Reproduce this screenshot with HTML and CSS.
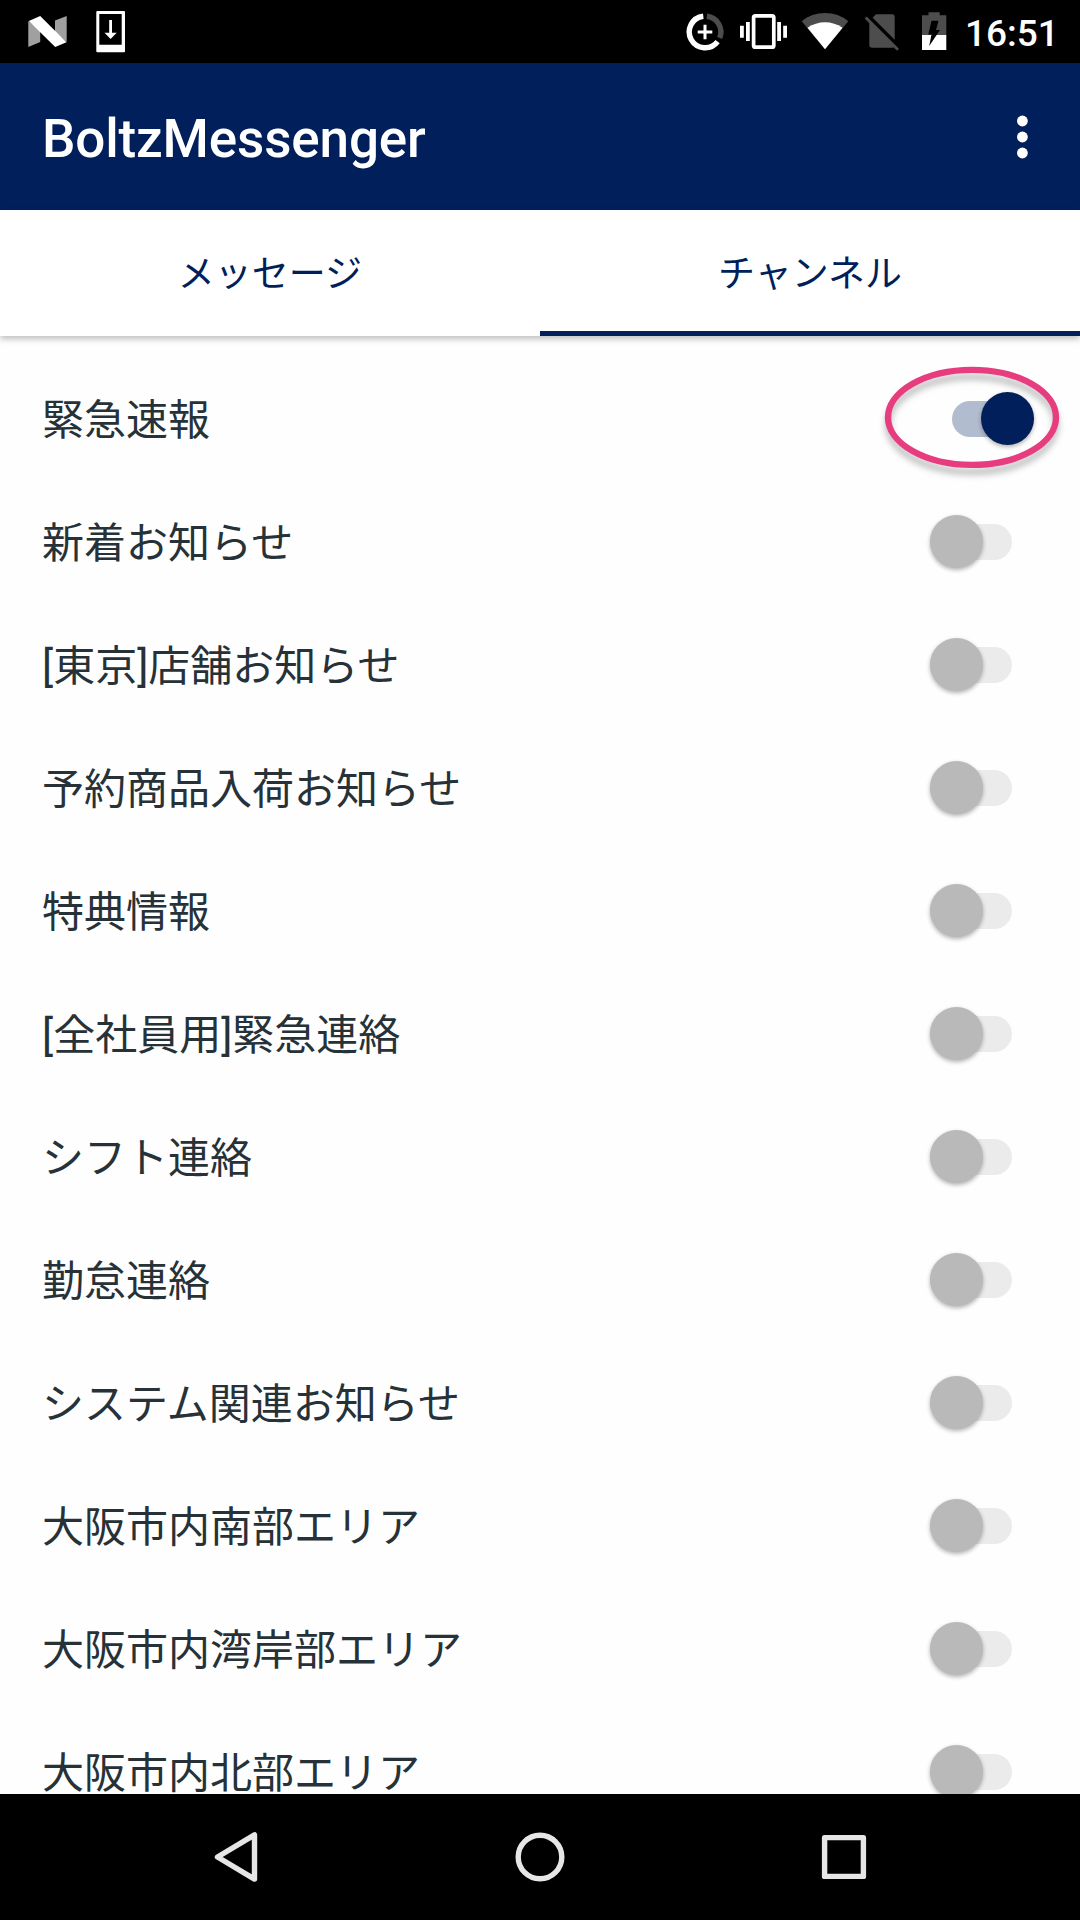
FILE: index.html
```html
<!DOCTYPE html>
<html lang="ja">
<head>
    <meta charset="UTF-8">
    <meta name="viewport" content="width=device-width, initial-scale=1.0">
    <title>BoltzMessenger</title>
    <link rel="stylesheet" href="styles.css">
</head>
<body>
    <div class="status-bar">
        <svg class="status-left" width="140" height="63" viewBox="0 0 140 63">
            <!-- N logo -->
            <path fill="#a0a0a0" d="M28.3 21L40.2 30V42L28.3 47zM55 20.5L66.7 16V42L55 32z"/>
            <path fill="#fff" d="M28.8 21L40.2 16L66.5 42.3L55.2 47z"/>
            <!-- system update -->
            <path fill="#fff" fill-rule="evenodd" d="M97.3 11H124a1 1 0 0 1 1 1V51.3a1 1 0 0 1-1 1H97.3a1 1 0 0 1-1-1V12a1 1 0 0 1 1-1zM99.3 14V44.7H121.7V14z"/>
            <path fill="#fff" d="M109.2 20H112V32.7H116.7L110.6 39L104.5 32.7H109.2z"/>
        </svg>
        <svg class="status-right" width="290" height="63" viewBox="670 0 290 63">
            <!-- data saver -->
            <g fill="none" stroke-width="5.4">
                <path stroke="#fff" d="M703.3 16.3A15.8 15.8 0 1 0 717.6 41.6"/>
                <path stroke="#4d4d4d" d="M706.9 16.3A15.8 15.8 0 0 1 719.7 37.9"/>
                <path stroke="#fff" stroke-width="3" d="M697.7 32H712.3M705 24.7V39.3"/>
            </g>
            <!-- vibrate -->
            <rect x="753.6" y="15.8" width="20.2" height="31.4" rx="1.8" fill="none" stroke="#fff" stroke-width="3.7"/>
            <path fill="#fff" d="M746 22H749.8V41H746zM740 25.7H743.8V37.7H740zM777.2 22H781V41H777.2zM783.2 25.7H787V37.7H783.2z"/>
            <!-- wifi -->
            <path fill="#4d4d4d" d="M801.7 21.2Q811.5 13 825 13T848.3 21.2L825 49.2z"/>
            <path fill="#fff" d="M807.5 27.8Q815.5 22.3 825 22.3T842.5 27.8L825 49.2z"/>
            <!-- no sim -->
            <path fill="#4d4d4d" d="M876 14.3H892a2.7 2.7 0 0 1 2.7 2.7V45a2.7 2.7 0 0 1-2.7 2.7H872a2.7 2.7 0 0 1-2.7-2.7V21z"/>
            <path stroke="#000" stroke-width="4" d="M867.5 15.5L899.5 47.5"/>
            <path stroke="#4d4d4d" stroke-width="2.8" d="M865.7 17.4L898 49.7"/>
            <!-- battery charging -->
            <path fill="#4d4d4d" d="M928.5 12.3H939.7V15.2H946.3V35H922V15.2H928.5z"/>
            <path fill="#fff" d="M922 35H946.3V50H922z"/>
            <path d="M931.5 20.7H938.5L936 30H940L929.2 46L931.5 34.5H928.3z"/>
        </svg>
        <span class="clock">16:51</span>
    </div>

    <div class="app-bar">
        <h1>BoltzMessenger</h1>
        <svg class="menu" width="12" height="44" viewBox="0 0 12 44" fill="#fff">
            <circle cx="6.4" cy="6" r="5.4"/>
            <circle cx="6.4" cy="22" r="5.4"/>
            <circle cx="6.4" cy="38" r="5.4"/>
        </svg>
    </div>

    <div class="tabs">
        <div class="tab">メッセージ</div>
        <div class="tab active">チャンネル</div>
    </div>

    <div class="channel-list">
        <div class="channel marked">
            <span>緊急速報</span>
            <div class="switch on"></div>
            <svg class="marker" width="190" height="120" viewBox="0 0 190 120">
                <ellipse cx="95" cy="60.4" rx="84" ry="47.5"/>
            </svg>
        </div>
        <div class="channel"><span>新着お知らせ</span><div class="switch"></div></div>
        <div class="channel"><span>[東京]店舗お知らせ</span><div class="switch"></div></div>
        <div class="channel"><span>予約商品入荷お知らせ</span><div class="switch"></div></div>
        <div class="channel"><span>特典情報</span><div class="switch"></div></div>
        <div class="channel"><span>[全社員用]緊急連絡</span><div class="switch"></div></div>
        <div class="channel"><span>シフト連絡</span><div class="switch"></div></div>
        <div class="channel"><span>勤怠連絡</span><div class="switch"></div></div>
        <div class="channel"><span>システム関連お知らせ</span><div class="switch"></div></div>
        <div class="channel"><span>大阪市内南部エリア</span><div class="switch"></div></div>
        <div class="channel"><span>大阪市内湾岸部エリア</span><div class="switch"></div></div>
        <div class="channel"><span>大阪市内北部エリア</span><div class="switch"></div></div>
    </div>

    <div class="nav-bar">
        <svg width="60" height="60" viewBox="0 0 60 60">
            <path d="M11.5 30L48.5 7.9V52.1z"/>
        </svg>
        <svg width="60" height="60" viewBox="0 0 60 60">
            <circle cx="30" cy="30" r="21.8"/>
        </svg>
        <svg width="60" height="60" viewBox="0 0 60 60">
            <rect x="10.6" y="10.6" width="38.8" height="38.8"/>
        </svg>
    </div>
</body>
</html>
```
FILE: styles.css
```css
* {
    box-sizing: border-box;
}
body {
    margin: 0;
    width: 1080px;
    height: 1920px;
    display: flex;
    flex-direction: column;
    overflow: hidden;
    background-color: #fefefe;
    font-family: Roboto, "Noto Sans CJK JP", sans-serif;
}
svg {
    display: block;
}
.status-bar {
    flex: none;
    height: 63px;
    display: flex;
    align-items: center;
    background-color: #000;
    color: #fff;
}
.status-right {
    margin-left: auto;
}
.clock {
    width: 120px;
    padding: 3px 0 0 5px;
    font-size: 37px;
    font-weight: 500;
}
.app-bar {
    flex: none;
    height: 147px;
    padding: 0 52px 0 42px;
    display: flex;
    align-items: center;
    justify-content: space-between;
    background-color: #001f5b;
    color: #fff;
}
h1 {
    margin: 5px 0 0;
    font-size: 53px;
    font-weight: 500;
    letter-spacing: -0.15px;
}
.tabs {
    flex: none;
    height: 126px;
    display: flex;
    background-color: #fff;
    box-shadow: 0 3px 6px rgba(0, 0, 0, 0.25);
    z-index: 1;
}
.tab {
    flex: 1;
    display: flex;
    align-items: center;
    justify-content: center;
    font-size: 37px;
    color: #001f5b;
    border-bottom: 5px solid transparent;
}
.tab.active {
    border-bottom-color: #001f5b;
}
.channel-list {
    flex: 1;
    min-height: 0;
    padding-top: 21px;
    overflow: hidden;
}
.channel {
    height: 123px;
    padding: 0 68px 0 42px;
    display: flex;
    align-items: center;
    justify-content: space-between;
    font-size: 42px;
    color: #263238;
}
.channel span {
    padding-bottom: 4px;
}
.channel.marked {
    position: relative;
    padding-right: 46px;
}

/* switches */
.switch {
    width: 82px;
    height: 36px;
    display: flex;
    align-items: center;
    border-radius: 18px;
    background-color: #ebebeb;
}
.switch::before {
    content: "";
    width: 53px;
    height: 53px;
    flex: none;
    border-radius: 50%;
    background-color: #b9b9b9;
    box-shadow: 0 2px 4px rgba(0, 0, 0, 0.3);
}
.switch.on {
    justify-content: flex-end;
    background-color: #b2bccf;
}
.switch.on::before {
    background-color: #001f5b;
}

/* highlight round the first switch */
.marker {
    position: absolute;
    top: 0;
    right: 13px;
    fill: none;
    stroke: #e73c7e;
    stroke-width: 6.4px;
    filter: drop-shadow(0 7px 3px rgba(0, 0, 0, 0.25));
}
.nav-bar {
    flex: none;
    height: 126px;
    display: flex;
    align-items: center;
    justify-content: center;
    gap: 244px;
    background-color: #000;
    fill: none;
    stroke: #e6e6e6;
    stroke-width: 5.4px;
    stroke-linejoin: round;
}
```
